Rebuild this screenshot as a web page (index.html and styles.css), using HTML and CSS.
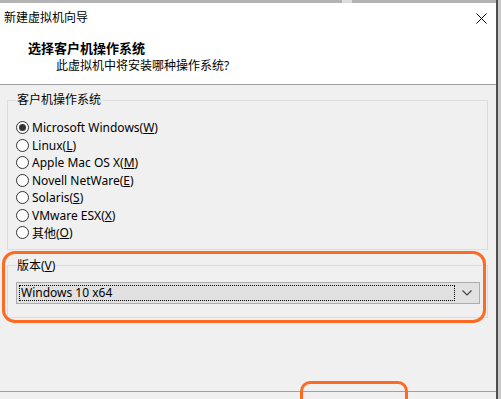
FILE: index.html
```html
<!DOCTYPE html>
<html lang="zh-CN">
<head>
    <meta charset="UTF-8">
    <title>新建虚拟机向导</title>
    <link rel="stylesheet" href="styles.css">
</head>
<body>
    <div class="frame">
        <div class="topbar"><span class="topbar-light"></span></div>

        <div class="header">
            <div class="title-row">
                <span class="title">新建虚拟机向导</span>
                <svg class="close" width="11" height="11" viewBox="0 0 11 11">
                    <path d="M0.5 0.5 L10.5 10.5 M10.5 0.5 L0.5 10.5" stroke="#000" stroke-width="1" fill="none"/>
                </svg>
            </div>
            <div class="heading">选择客户机操作系统</div>
            <div class="subheading">此虚拟机中将安装哪种操作系统?</div>
        </div>

        <div class="content">
            <fieldset class="group">
                <legend>客户机操作系统</legend>
                <div class="radio-list">
                    <div class="radio-row"><span class="radio checked"></span>Microsoft Windows(<u>W</u>)</div>
                    <div class="radio-row"><span class="radio"></span>Linux(<u>L</u>)</div>
                    <div class="radio-row"><span class="radio"></span>Apple Mac OS X(<u>M</u>)</div>
                    <div class="radio-row"><span class="radio"></span>Novell NetWare(<u>E</u>)</div>
                    <div class="radio-row"><span class="radio"></span>Solaris(<u>S</u>)</div>
                    <div class="radio-row"><span class="radio"></span>VMware ESX(<u>X</u>)</div>
                    <div class="radio-row"><span class="radio"></span>其他(<u>O</u>)</div>
                </div>
            </fieldset>

            <fieldset class="group version">
                <legend>版本(<u>V</u>)</legend>
                <div class="combo">
                    <span class="combo-value">Windows 10 x64</span>
                    <svg class="chevron" width="10" height="6" viewBox="0 0 10 6">
                        <path d="M0.5 0.5 L5 5 L9.5 0.5" stroke="#444" stroke-width="1.2" fill="none"/>
                    </svg>
                </div>
            </fieldset>
        </div>

        <div class="footer"></div>
    </div>

    <!-- annotation marks drawn over the dialog -->
    <div class="mark mark-version"></div>
    <div class="mark mark-button"></div>
</body>
</html>
```

FILE: styles.css
```css
body {
    margin: 0;
    width: 501px;
    height: 399px;
    overflow: hidden;
    background-color: #c9c9c9;
    font-family: "Noto Sans", "Noto Sans CJK SC", sans-serif;
    font-size: 12px;
    color: #000;
    position: relative;
}
.frame {
    width: 496px;
    height: 399px;
    border-right: 2px solid #4d4d4d;
    background-color: #f0f0f0;
}
.topbar {
    height: 3px;
    background-color: #b3b3b3;
    display: flex;
}
.topbar-light {
    width: 10px;
    margin-left: 342px;
    background-color: #dedede;
}
.header {
    height: 81px;
    background-color: #fff;
    border-bottom: 1px solid #a0a0a0;
}
.title-row {
    display: flex;
    align-items: center;
    justify-content: space-between;
    padding: 7px 9px 0 4px;
    height: 16px;
    line-height: 16px;
}
.close {
    display: block;
    margin-top: 1px;
}
.heading {
    margin: 14px 0 0 28px;
    font-size: 13px;
    font-weight: bold;
    line-height: 16px;
}
.subheading {
    margin: 2px 0 0 56px;
    line-height: 16px;
}
.content {
    height: 306px;
    padding: 0 8px 0 7px;
    box-sizing: border-box;
    overflow: hidden;
}
.group {
    margin: 7px 0 0 0;
    padding: 11px 8px 7px 8px;
    border: 1px solid #dcdcdc;
    min-width: 0;
}
.group legend {
    padding: 0 1px;
    margin-left: 0;
    line-height: 16px;
}
.radio-row {
    height: 17.5px;
    display: flex;
    align-items: center;
    white-space: nowrap;
}
.radio {
    width: 11px;
    height: 11px;
    border: 1px solid #333;
    border-radius: 50%;
    background-color: #fff;
    margin-right: 3px;
    display: flex;
    align-items: center;
    justify-content: center;
    flex-shrink: 0;
}
.radio.checked::after {
    content: "";
    width: 7px;
    height: 7px;
    border-radius: 50%;
    background-color: #333;
}
.version {
    margin-top: 8px;
    padding: 8px 7px 13px 8px;
}
.combo {
    height: 20px;
    border: 1px solid #adadad;
    background-color: #e1e1e1;
    display: flex;
    align-items: center;
    padding: 0 0 0 2px;
}
.combo-value {
    flex: 1;
    height: 14px;
    line-height: 14px;
    padding-left: 1px;
    border: 1px dotted #000;
    margin-right: 7px;
}
.chevron {
    display: block;
    margin-right: 7px;
}
.footer {
    height: 8px;
    border-top: 1px solid #a0a0a0;
}
.mark {
    position: absolute;
    border: 3px solid #fd6a22;
    box-sizing: border-box;
}
.mark-version {
    left: 2px;
    top: 251px;
    width: 484px;
    height: 72px;
    border-radius: 13px;
}
.mark-button {
    left: 300px;
    top: 381px;
    width: 108px;
    height: 18px;
    border-bottom: none;
    border-radius: 10px 10px 0 0;
}
```
